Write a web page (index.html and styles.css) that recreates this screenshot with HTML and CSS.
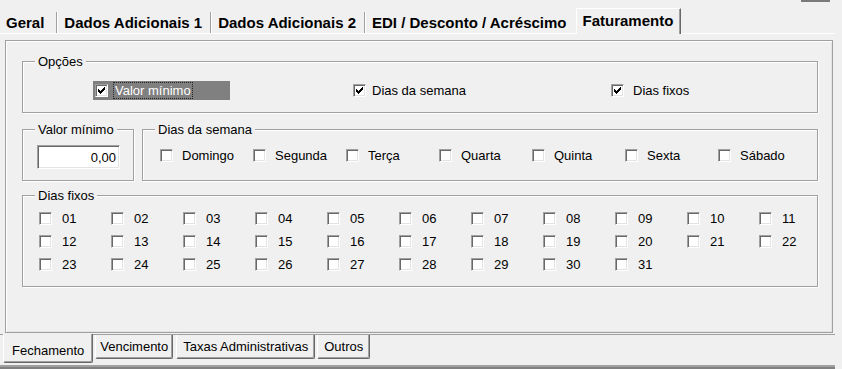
FILE: index.html
```html
<!DOCTYPE html>
<html lang="pt-BR">
<head>
    <meta charset="UTF-8">
    <title>Faturamento</title>
    <link rel="stylesheet" href="styles.css">
</head>
<body>
<div class="window">
    <div class="topstrip"><span></span></div>

    <ul class="tabs">
        <li>Geral</li>
        <li>Dados Adicionais 1</li>
        <li>Dados Adicionais 2</li>
        <li>EDI / Desconto / Acréscimo</li>
        <li class="active">Faturamento</li>
    </ul>

    <div class="panel">
        <!-- opções -->
        <fieldset class="group opcoes">
            <legend>Opções</legend>
            <div class="opts">
                <div class="opt first">
                    <label class="focus">
                        <span class="cb"><svg width="13" height="13" viewBox="0 0 13 13"><path d="M3 5H4V6H5V7H6V6H7V5H8V4H9V3H10V6H9V7H8V8H7V9H6V10H5V9H4V8H3Z"/></svg></span>
                        <span class="txt">Valor mínimo</span>
                    </label>
                </div>
                <div class="opt second">
                    <label>
                        <span class="cb"><svg width="13" height="13" viewBox="0 0 13 13"><path d="M3 5H4V6H5V7H6V6H7V5H8V4H9V3H10V6H9V7H8V8H7V9H6V10H5V9H4V8H3Z"/></svg></span>
                        <span>Dias da semana</span>
                    </label>
                </div>
                <div class="opt">
                    <label class="wide">
                        <span class="cb"><svg width="13" height="13" viewBox="0 0 13 13"><path d="M3 5H4V6H5V7H6V6H7V5H8V4H9V3H10V6H9V7H8V8H7V9H6V10H5V9H4V8H3Z"/></svg></span>
                        <span>Dias fixos</span>
                    </label>
                </div>
            </div>
        </fieldset>

        <div class="row">
            <fieldset class="group valor">
                <legend>Valor mínimo</legend>
                <input class="edit" type="text" value="0,00" readonly>
            </fieldset>
            <fieldset class="group semana">
                <legend>Dias da semana</legend>
                <div class="dias">
                    <label><span class="cb"></span>Domingo</label>
                    <label><span class="cb"></span>Segunda</label>
                    <label><span class="cb"></span>Terça</label>
                    <label><span class="cb"></span>Quarta</label>
                    <label><span class="cb"></span>Quinta</label>
                    <label><span class="cb"></span>Sexta</label>
                    <label><span class="cb"></span>Sábado</label>
                </div>
            </fieldset>
        </div>

        <fieldset class="group fixos">
            <legend>Dias fixos</legend>
            <div class="mes">
                <label><span class="cb"></span>01</label>
                <label><span class="cb"></span>02</label>
                <label><span class="cb"></span>03</label>
                <label><span class="cb"></span>04</label>
                <label><span class="cb"></span>05</label>
                <label><span class="cb"></span>06</label>
                <label><span class="cb"></span>07</label>
                <label><span class="cb"></span>08</label>
                <label><span class="cb"></span>09</label>
                <label><span class="cb"></span>10</label>
                <label><span class="cb"></span>11</label>
                <label><span class="cb"></span>12</label>
                <label><span class="cb"></span>13</label>
                <label><span class="cb"></span>14</label>
                <label><span class="cb"></span>15</label>
                <label><span class="cb"></span>16</label>
                <label><span class="cb"></span>17</label>
                <label><span class="cb"></span>18</label>
                <label><span class="cb"></span>19</label>
                <label><span class="cb"></span>20</label>
                <label><span class="cb"></span>21</label>
                <label><span class="cb"></span>22</label>
                <label><span class="cb"></span>23</label>
                <label><span class="cb"></span>24</label>
                <label><span class="cb"></span>25</label>
                <label><span class="cb"></span>26</label>
                <label><span class="cb"></span>27</label>
                <label><span class="cb"></span>28</label>
                <label><span class="cb"></span>29</label>
                <label><span class="cb"></span>30</label>
                <label><span class="cb"></span>31</label>
            </div>
        </fieldset>
    </div>

    <ul class="btabs">
        <li class="active">Fechamento</li>
        <li>Vencimento</li>
        <li>Taxas Administrativas</li>
        <li>Outros</li>
    </ul>
    <div class="bottombar"></div>
</div>
</body>
</html>
```

FILE: styles.css
```css
*{
    margin:0;
    padding:0;
    box-sizing:border-box;
}
ul{
    list-style:none;
}
body{
    background:#f0f0f0;
    color:#000;
    font:13px/15px "Liberation Sans", Arial, sans-serif;
}
.window{
    width:835px;
    height:369px;
}

/* pedaço do botão cortado no topo */
.topstrip{
    height:2px;
    display:flex;
    justify-content:flex-end;
    padding-right:5px;
}
.topstrip span{
    width:29px;
    background:#7a7a7a;
}

/* abas de cima */
.tabs{
    display:flex;
    align-items:flex-end;
    height:32px;
    border-bottom:1px solid #fff;
    font:bold 15px/18px "Liberation Sans", Arial, sans-serif;
}
.tabs li{
    height:21px;
    padding:2px 8px 0 7px;
    white-space:nowrap;
    border-right:1px solid #a0a0a0;
    box-shadow:1px 0 0 #fff;
}
.tabs li:first-child{
    padding-left:6px;
    padding-right:12px;
}
.tabs li:has(+ .active){
    border-right:0;
    box-shadow:none;
    padding-right:9px;
}
.tabs li.active{
    height:26px;
    margin-bottom:-1px;
    padding:3px 7px 0 6px;
    background:#f0f0f0;
    border-top:1px solid #fff;
    border-left:1px solid #fff;
    border-right:1px solid #696969;
    box-shadow:inset -1px 0 0 #a0a0a0;
}

/* painel */
.panel{
    margin:6px 2px 0 5px;
    height:293px;
    border:1px solid #a0a0a0;
    box-shadow:inset 1px 1px 0 #fff, inset -1px -1px 0 #e3e3e3;
    padding:13px 14px 0 16px;
}
.group{
    min-width:0;
    border:1px solid #a0a0a0;
    box-shadow:inset 1px 1px 0 #fff, 1px 1px 0 #fff;
    padding:12px 12px 12px 12px;
}
.group legend{
    padding:0 3px;
    background:#f0f0f0;
}

/* checkbox */
.cb{
    flex:none;
    display:block;
    width:13px;
    height:13px;
    background:#fff;
    border:1px solid;
    border-color:#a0a0a0 #fff #fff #a0a0a0;
    box-shadow:inset 1px 1px 0 #696969, inset -1px -1px 0 #e3e3e3;
    position:relative;
}
.cb svg{
    display:block;
    margin:-1px;
}
label{
    display:flex;
    align-items:center;
    white-space:nowrap;
}

/* opções */
.opts{
    display:flex;
    margin-left:58px;
}
.opt.first{
    width:260px;
}
.opt.second{
    width:258px;
}
.opt label{
    height:19px;
    gap:6px;
}
.opt label.wide{
    gap:9px;
}
.opt label.focus{
    width:137px;
    padding-left:2px;
    gap:5px;
    background:#808080;
    color:#fff;
}
.focus .txt{
    height:17px;
    line-height:15px;
    padding:0 1px;
    border:1px dotted #222;
}

.row{
    display:flex;
    gap:8px;
    margin-top:9px;
}
.valor{
    width:112px;
    flex:none;
    padding-top:8px;
    padding-bottom:11px;
}
.edit{
    display:block;
    margin-left:2px;
    width:83px;
    height:24px;
    background:#fff;
    border:1px solid;
    border-color:#a0a0a0 #fff #fff #a0a0a0;
    box-shadow:inset 1px 1px 0 #696969, inset -1px -1px 0 #e3e3e3;
    font:13px/23px "Liberation Sans", Arial, sans-serif;
    text-align:right;
    padding-right:3px;
    color:#000;
    outline:none;
}
.semana{
    flex:1;
    padding-top:11px;
}
.dias{
    display:grid;
    grid-template-columns:repeat(7, 93px);
    margin-left:5px;
}
.dias label{
    height:15px;
    gap:9px;
}

.fixos{
    margin-top:7px;
    padding-top:8px;
    padding-bottom:14px;
}
.mes{
    display:grid;
    grid-template-columns:repeat(11, 72px);
    row-gap:8px;
    margin-left:4px;
}
.mes label{
    height:15px;
    gap:10px;
}

/* abas de baixo */
.btabs{
    display:flex;
    align-items:flex-start;
    gap:2px;
    height:31px;
    margin-top:1px;
    padding-left:3px;
    border-top:1px solid #a0a0a0;
}
.btabs li{
    height:24px;
    padding:4px 6px 0;
    white-space:nowrap;
    border-left:1px solid #fff;
    border-right:1px solid #696969;
    border-bottom:1px solid #696969;
    box-shadow:inset -1px -1px 0 #a0a0a0;
    border-radius:0 0 2px 2px;
}
.btabs li:nth-child(2){
    padding:4px 4px 0;
}
.btabs li:nth-child(3){
    margin-left:1px;
}
.btabs li.active{
    height:29px;
    margin-top:-1px;
    padding:9px 8px 0;
    background:#f0f0f0;
}
.bottombar{
    height:4px;
    background:#808080;
    border-top:2px solid #a0a0a0;
}
```
